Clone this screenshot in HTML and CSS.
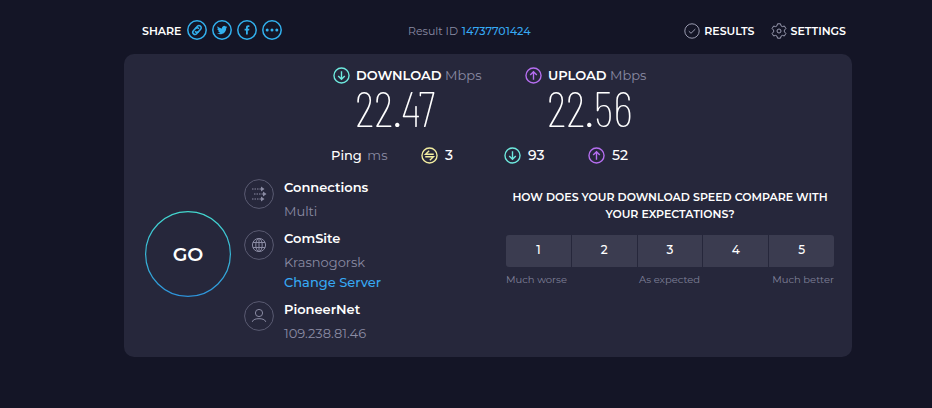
FILE: index.html
```html
<!DOCTYPE html>
<html lang="en">
<head>
    <meta charset="UTF-8">
    <meta name="viewport" content="width=device-width, initial-scale=1.0">
    <title>Speed test result</title>
    <link rel="stylesheet" href="styles.css">
</head>
<body>

    <!-- Shared icons -->
    <svg class="sprite" aria-hidden="true">
        <linearGradient id="goRing" x1="0" y1="0" x2="0" y2="1">
            <stop offset="0" stop-color="#43d9cf"/>
            <stop offset="1" stop-color="#2d94dc"/>
        </linearGradient>
        <symbol id="arrow-down" viewBox="0 0 16 16">
            <circle cx="8" cy="8" r="7.1"/>
            <path d="M8 4v7.4M4.9 8.4 8 11.5l3.1-3.1"/>
        </symbol>
        <symbol id="arrow-up" viewBox="0 0 16 16">
            <circle cx="8" cy="8" r="7.1"/>
            <path d="M8 12V4.6M4.9 7.6 8 4.5l3.1 3.1"/>
        </symbol>
    </svg>

    <!-- Top bar -->
    <header class="top">
        <div class="share">
            <span class="share__label">SHARE</span>
            <div class="share__links">
                <a href="#link" class="share__link" aria-label="Copy link">
                    <svg viewBox="0 0 20 20"><circle cx="10" cy="10" r="9.2"/><g transform="rotate(-48 10 10)"><path d="M9.5 12.2H7a2.2 2.2 0 0 1 0-4.4h3.2a2.2 2.2 0 0 1 2 2.8"/><path d="M10.5 7.8H13a2.2 2.2 0 0 1 0 4.4H9.8a2.2 2.2 0 0 1-2-2.8"/></g></svg>
                </a>
                <a href="#twitter" class="share__link" aria-label="Twitter">
                    <svg viewBox="0 0 20 20"><circle cx="10" cy="10" r="9.2"/><path class="solid" d="M15.2 6.9c-.4.2-.8.3-1.2.3.4-.3.7-.7.9-1.1-.4.2-.9.4-1.3.5a2.1 2.1 0 0 0-3.6 1.9c-1.7-.1-3.3-.9-4.3-2.2-.6 1-.3 2.2.6 2.8-.3 0-.6-.1-.9-.3 0 1 .7 1.9 1.7 2.1-.3.1-.6.1-.9 0 .3.8 1 1.4 1.9 1.5-.9.7-1.9 1-3.1.9 3.6 2.2 9.2.3 9.2-5.1.4-.3.7-.7 1-1.3z"/></svg>
                </a>
                <a href="#facebook" class="share__link" aria-label="Facebook">
                    <svg viewBox="0 0 20 20"><circle cx="10" cy="10" r="9.2"/><path class="solid" d="M9 14.5v-4H7.6V8.8H9V7.6c0-1.5.9-2.3 2.2-2.3h1.2v1.6h-.8c-.6 0-.8.3-.8.8v1.1h1.6l-.3 1.7h-1.3v4z"/></svg>
                </a>
                <a href="#more" class="share__link" aria-label="More">
                    <svg viewBox="0 0 20 20"><circle cx="10" cy="10" r="9.2"/><g class="solid"><circle cx="5.2" cy="10" r="1.5"/><circle cx="10" cy="10" r="1.5"/><circle cx="14.8" cy="10" r="1.5"/></g></svg>
                </a>
            </div>
        </div>
        <p class="result">Result ID <a href="#result">14737701424</a></p>
        <nav class="nav">
            <a href="#results" class="nav__link">
                <svg viewBox="0 0 16 16"><circle cx="8" cy="8" r="7.2"/><path d="m4.8 8.2 2.2 2.1 4.3-4.2"/></svg>
                RESULTS
            </a>
            <a href="#settings" class="nav__link">
                <svg viewBox="0 0 16 16"><path d="M6.5.8h3l.5 2 1.4.8 2-.6 1.5 2.6-1.5 1.5v1.8l1.500 1.500-1.500 2.600-2-.6-1.400.8-.5 2h-3l-.5-2-1.400-.8-2 .6-1.500-2.600 1.500-1.500V7.100L1.100 5.600 2.600 3l2 .6L6 2.800z"/><circle cx="8" cy="8" r="2"/></svg>
                SETTINGS
            </a>
        </nav>
    </header>

    <main class="panel">
        <!-- Speeds -->
        <section class="speeds">
            <div class="speed">
                <h2 class="speed__title"><svg class="icon icon--down"><use href="#arrow-down"/></svg>DOWNLOAD <span class="unit">Mbps</span></h2>
                <p class="speed__value">22.47</p>
            </div>
            <div class="speed">
                <h2 class="speed__title"><svg class="icon icon--up"><use href="#arrow-up"/></svg>UPLOAD <span class="unit">Mbps</span></h2>
                <p class="speed__value">22.56</p>
            </div>
        </section>

        <!-- Ping -->
        <section class="ping">
            <span class="ping__label">Ping <span class="unit">ms</span></span>
            <span class="ping__value"><svg class="icon icon--idle" viewBox="0 0 16 16"><circle cx="8" cy="8" r="7.1"/><path d="M12 6.8H4.3l3.4-3.2M4 9.2h7.7l-3.4 3.2"/></svg>3</span>
            <span class="ping__value"><svg class="icon icon--down"><use href="#arrow-down"/></svg>93</span>
            <span class="ping__value"><svg class="icon icon--up"><use href="#arrow-up"/></svg>52</span>
        </section>

        <div class="details">
            <button type="button" class="go">
                <svg class="go__ring" viewBox="0 0 86 86"><circle cx="43" cy="43" r="42.4" stroke="url(#goRing)"/></svg>
                <span class="go__text">GO</span>
            </button>

            <!-- Connection info -->
            <ul class="info">
                <li class="info__item">
                    <svg class="info__icon" viewBox="0 0 30 30"><circle cx="15" cy="15" r="14.4"/><path stroke-dasharray="1.5 1" d="M8 10h9M10 15h9M8 20h9"/><path class="heads" d="m17 7.5 3.5 2.5-3.5 2.5zM19 12.5l3.5 2.5-3.5 2.5zM17 17.5l3.5 2.5-3.5 2.5z"/></svg>
                    <div>
                        <h3 class="info__name">Connections</h3>
                        <p class="info__text">Multi</p>
                    </div>
                </li>
                <li class="info__item">
                    <svg class="info__icon" viewBox="0 0 30 30"><circle cx="15" cy="15" r="14.4"/><circle cx="15" cy="15" r="6.6"/><ellipse cx="15" cy="15" rx="3.2" ry="6.6"/><path d="M15 8.4v13.2M9 12.500h12M9 17.500h12"/></svg>
                    <div>
                        <h3 class="info__name">ComSite</h3>
                        <p class="info__text">Krasnogorsk</p>
                        <a href="#server" class="info__link">Change Server</a>
                    </div>
                </li>
                <li class="info__item">
                    <svg class="info__icon" viewBox="0 0 30 30"><circle cx="15" cy="15" r="14.4"/><circle cx="15" cy="12" r="3.6"/><path d="M8.5 21v-.7c.8-2 3.5-2.6 6.5-2.6s5.7.6 6.5 2.6v.7"/></svg>
                    <div>
                        <h3 class="info__name">PioneerNet</h3>
                        <p class="info__text">109.238.81.46</p>
                    </div>
                </li>
            </ul>

            <!-- Survey -->
            <section class="survey">
                <h2 class="survey__title">HOW DOES YOUR DOWNLOAD SPEED COMPARE WITH YOUR EXPECTATIONS?</h2>
                <div class="survey__scale">
                    <button type="button">1</button>
                    <button type="button">2</button>
                    <button type="button">3</button>
                    <button type="button">4</button>
                    <button type="button">5</button>
                </div>
                <div class="survey__legend">
                    <span>Much worse</span>
                    <span>As expected</span>
                    <span>Much better</span>
                </div>
            </section>
        </div>
    </main>
</body>
</html>
```
FILE: styles.css
```css
* {
    box-sizing: border-box;
}

body {
    margin: 0;
    padding: 0 80px 50px 124px;
    background-color: #141526;
    color: #fff;
    font-family: Montserrat, Inter, sans-serif;
    font-size: 13px;
    line-height: 20px;
}

h2, h3, p, ul {
    margin: 0;
    padding: 0;
    font-size: inherit;
    font-weight: 500;
    list-style: none;
}

a {
    color: #36a9f4;
    text-decoration: none;
}

button {
    border: none;
    color: #fff;
    font-family: inherit;
    cursor: pointer;
}

svg {
    flex: none;
    fill: none;
    stroke: currentColor;
}

.sprite {
    position: absolute;
    width: 0;
    height: 0;
}

.solid {
    fill: currentColor;
    stroke: none;
}

/* Top bar */
.top {
    display: flex;
    align-items: center;
    height: 54px;
    padding: 8px 6px 0 18px;
    font-size: 11px;
}

.share {
    display: flex;
    align-items: center;
    gap: 6px;
    width: 266px;
}

.share__label {
    font-weight: 600;
}

.share__links {
    display: flex;
    gap: 5px;
    padding-bottom: 3px;
}

.share__link {
    color: #32b1ee;
}

.share__link svg {
    display: block;
    width: 20px;
    height: 20px;
    stroke-width: 1.5;
}

.result {
    color: #8a8ba3;
    font-weight: 400;
    word-spacing: normal;
}

.result a {
    margin-left: 1px;
    font-weight: 500;
}

.nav {
    display: flex;
    gap: 16px;
    margin-left: auto;
}

.nav__link {
    display: flex;
    align-items: center;
    gap: 4px;
    color: #fff;
    font-weight: 600;
}

.nav__link svg {
    width: 16px;
    height: 16px;
    color: #9a9bb0;
}

/* Panel */
.panel {
    padding: 11px 18px 14px 21px;
    border-radius: 10px;
    background-color: #26273b;
}

.speeds {
    display: grid;
    grid-template-columns: 192px 192px;
    padding-left: 188px;
}

.speed__title {
    display: flex;
    align-items: center;
    font-weight: 600;
    white-space: pre;
}

.unit {
    color: #8a8ba3;
    font-weight: 400;
}

.icon {
    width: 17px;
    height: 17px;
    margin-right: 6px;
    stroke-width: 1.3;
}

.icon--down {
    color: #6ee9de;
}

.icon--up {
    color: #b56ef0;
}

.icon--idle {
    color: #f2eda0;
}

.speed__value {
    padding-left: 22px;
    font-family: "Barlow Condensed", "Roboto Condensed", Roboto, sans-serif;
    font-size: 50px;
    font-weight: 100;
    line-height: 44px;
}

.ping {
    display: grid;
    grid-template-columns: 90px 83px 84px 84px;
    margin-top: 16px;
    padding-left: 186px;
}

.ping__label {
    font-weight: 500;
}

.ping__label .unit {
    margin-left: 2px;
}

.ping__value {
    display: flex;
    align-items: center;
    font-size: 14px;
    font-weight: 500;
}

.ping__value .icon {
    margin-right: 7px;
}

/* Details */
.details {
    display: grid;
    grid-template-columns: 99px 262px 1fr;
    margin-top: 12px;
}

.go {
    display: grid;
    place-items: center;
    width: 86px;
    height: 86px;
    margin-top: 34px;
    padding: 0;
    border-radius: 50%;
    background: none;
    font-size: 19px;
    font-weight: 600;
}

.go__ring, .go__text {
    grid-area: 1 / 1;
}

.go__ring {
    width: 86px;
    height: 86px;
    stroke-width: 1.2;
}

.info__item {
    display: flex;
    gap: 10px;
    margin-bottom: 7px;
}

.info__item:last-child {
    margin-bottom: 0;
}

.info__icon {
    width: 30px;
    height: 30px;
    margin-top: 2px;
    color: #8a8ba3;
}

.info__icon circle:first-child {
    stroke: #5a5b72;
}

.heads {
    fill: currentColor;
    stroke: none;
}

.info__name {
    font-weight: 600;
}

.info__text {
    padding-top: 4px;
    color: #8a8ba3;
    font-weight: 400;
}

.info__link {
    display: block;
    font-weight: 500;
}

/* Survey */
.survey {
    padding-top: 12px;
    text-align: center;
}

.survey__title {
    font-size: 11px;
    font-weight: 600;
    line-height: 17px;
}

.survey__scale {
    display: grid;
    grid-template-columns: repeat(5, 1fr);
    gap: 1px;
    margin-top: 12px;
    border-radius: 3px;
    overflow: hidden;
}

.survey__scale button {
    height: 32px;
    padding: 0 0 3px;
    background-color: #3b3c50;
    font-size: 12px;
    font-weight: 500;
}

.survey__legend {
    display: flex;
    justify-content: space-between;
    padding-top: 3px;
    color: #7f8098;
    font-size: 10px;
}
```
